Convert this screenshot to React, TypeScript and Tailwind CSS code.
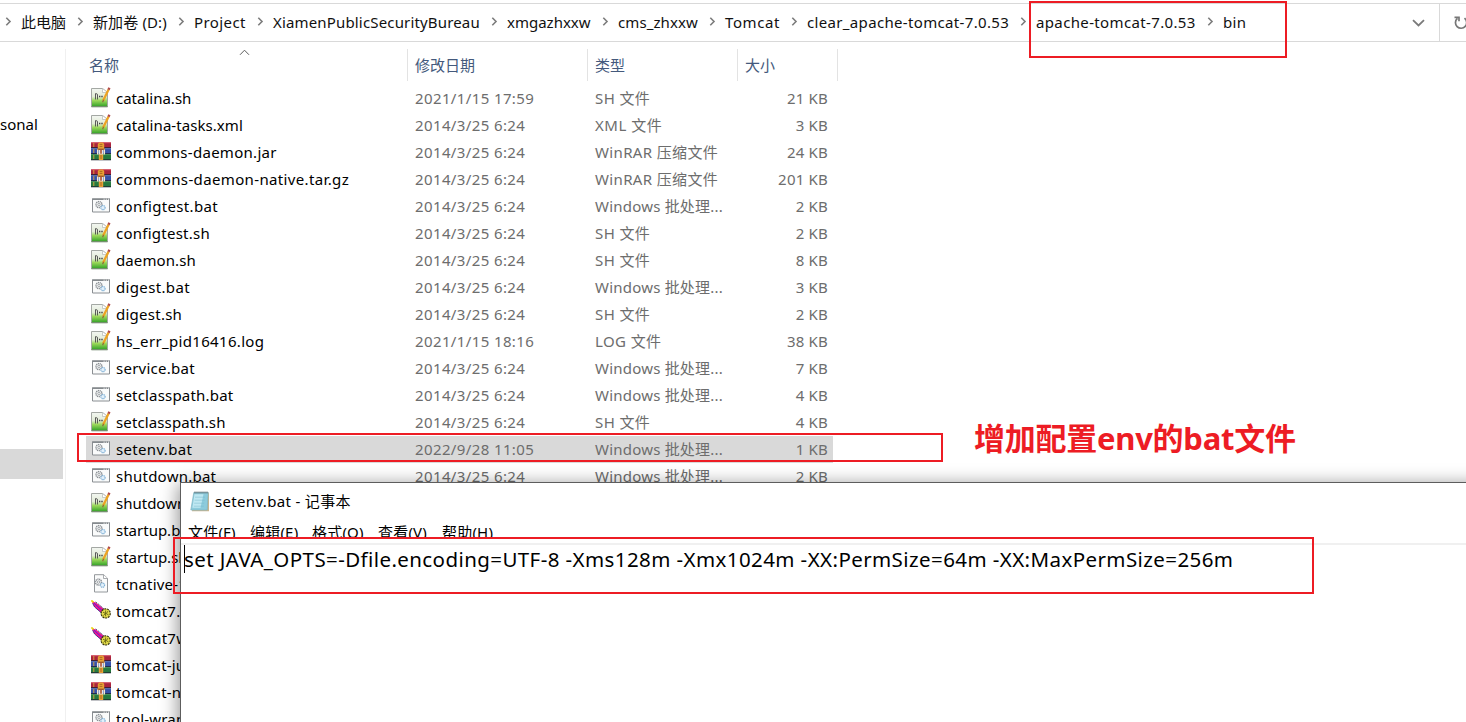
import React from "react";

type Kind = "npp" | "rar" | "bat" | "dll" | "feather";

interface FileRow {
  name: string;
  kind: Kind;
  date?: string;
  type?: string;
  size?: string;
  tracking?: string;
  selected?: boolean;
}

const D = "2014/3/25 6:24";
const BAT = "Windows 批处理...";
const RAR = "WinRAR 压缩文件";

const typeTracking: Record<string, string> = {
  [BAT]: "tracking-[0.21px]",
  [RAR]: "tracking-[0.36px]",
  "XML 文件": "tracking-[0.5px]",
};

const files: FileRow[] = [
  { name: "catalina.sh", kind: "npp", date: "2021/1/15 17:59", type: "SH 文件", size: "21 KB" },
  { name: "catalina-tasks.xml", kind: "npp", date: D, type: "XML 文件", size: "3 KB", tracking: "tracking-[0.06px]" },
  { name: "commons-daemon.jar", kind: "rar", date: D, type: RAR, size: "24 KB", tracking: "tracking-[0.28px]" },
  { name: "commons-daemon-native.tar.gz", kind: "rar", date: D, type: RAR, size: "201 KB", tracking: "tracking-[0.36px]" },
  { name: "configtest.bat", kind: "bat", date: D, type: BAT, size: "2 KB", tracking: "tracking-[0.33px]" },
  { name: "configtest.sh", kind: "npp", date: D, type: "SH 文件", size: "2 KB", tracking: "tracking-[0.25px]" },
  { name: "daemon.sh", kind: "npp", date: D, type: "SH 文件", size: "8 KB", tracking: "tracking-[0.1px]" },
  { name: "digest.bat", kind: "bat", date: D, type: BAT, size: "3 KB", tracking: "tracking-[0.35px]" },
  { name: "digest.sh", kind: "npp", date: D, type: "SH 文件", size: "2 KB", tracking: "tracking-[0.25px]" },
  { name: "hs_err_pid16416.log", kind: "npp", date: "2021/1/15 18:16", type: "LOG 文件", size: "38 KB", tracking: "tracking-[0.33px]" },
  { name: "service.bat", kind: "bat", date: D, type: BAT, size: "7 KB", tracking: "tracking-[0.25px]" },
  { name: "setclasspath.bat", kind: "bat", date: D, type: BAT, size: "4 KB", tracking: "tracking-[0.19px]" },
  { name: "setclasspath.sh", kind: "npp", date: D, type: "SH 文件", size: "4 KB", tracking: "tracking-[0.12px]" },
  { name: "setenv.bat", kind: "bat", date: "2022/9/28 11:05", type: BAT, size: "1 KB", tracking: "tracking-[0.33px]", selected: true },
  { name: "shutdown.bat", kind: "bat", date: D, type: BAT, size: "2 KB", tracking: "tracking-[0.25px]" },
  { name: "shutdown.sh", kind: "npp" },
  { name: "startup.bat", kind: "bat" },
  { name: "startup.sh", kind: "npp" },
  { name: "tcnative-1", kind: "dll", tracking: "tracking-[0.2px]" },
  { name: "tomcat7.", kind: "feather", tracking: "tracking-[0.3px]" },
  { name: "tomcat7w", kind: "feather", tracking: "tracking-[0.3px]" },
  { name: "tomcat-ju", kind: "rar", tracking: "tracking-[0.2px]" },
  { name: "tomcat-na", kind: "rar", tracking: "tracking-[0.2px]" },
  { name: "tool-wrap", kind: "bat", tracking: "tracking-[0.2px]" },
];

const crumbs: { label: string; style: string }[] = [
  { label: "此电脑", style: "w-[46px]" },
  { label: "新加卷 (D:)", style: "w-[75px] tracking-[0.12px]" },
  { label: "Project", style: "w-[53px] tracking-[0.42px]" },
  { label: "XiamenPublicSecurityBureau", style: "w-[208px] tracking-[0.16px]" },
  { label: "xmgazhxxw", style: "w-[85px]" },
  { label: "cms_zhxxw", style: "w-[81px] tracking-[0.1px]" },
  { label: "Tomcat", style: "w-[56px] tracking-[0.6px]" },
  { label: "clear_apache-tomcat-7.0.53", style: "w-[203px] tracking-[0.34px]" },
  { label: "apache-tomcat-7.0.53", style: "w-[161px] tracking-[0.36px]" },
  { label: "bin", style: "w-[24px] tracking-[0.3px]" },
];

function Gears() {
  return (
    <g fill="none">
      <circle cx="8" cy="6.6" r="3" stroke="#8a8f94" strokeWidth="1.5" strokeDasharray="1.2 0.6" />
      <circle cx="8" cy="6.6" r="1.2" stroke="#9a9fa4" strokeWidth="0.9" />
      <circle cx="12" cy="9.6" r="2.1" fill="#e3f1fb" stroke="#7fb0d6" strokeWidth="1.2" strokeDasharray="1.1 0.5" />
    </g>
  );
}

function FileIcon({ kind }: { kind: Kind }) {
  if (kind === "npp")
    return (
      <svg width="20" height="21" viewBox="0 0 20 21">
        <defs>
          <linearGradient id="green" x1="0" y1="0" x2="0" y2="1">
            <stop offset="0" stopColor="#f3f6f2" />
            <stop offset="0.45" stopColor="#e2ecd6" />
            <stop offset="0.66" stopColor="#9bd85a" />
            <stop offset="1" stopColor="#2fa026" />
          </linearGradient>
        </defs>
        <path d="M0.5 1.5h11l5 4v14.2h-16z" fill="url(#green)" stroke="#a4a8a4" />
        <path d="M0.5 19.7h16" stroke="#6d8a66" />
        <path d="M11.5 1.5v4h5z" fill="#fff" stroke="#b5b8b5" strokeWidth="0.7" />
        <path d="M4.5 6.5v6M6.5 7.2v5.3M4.5 6.8h1.6" stroke="#4a4a4a" strokeWidth="0.9" fill="none" />
        <path d="M8 9.5h1.4M10.3 9.5h1.4" stroke="#444" strokeWidth="1.6" />
        <path d="M17.6 2.5L12.2 13.6" stroke="#eda322" strokeWidth="2.3" />
        <path d="M18.4 0.8l-0.9 2" stroke="#b04a48" strokeWidth="2.4" />
        <path d="M12.6 12.8l-1 2.4" stroke="#8c6a3a" strokeWidth="1.2" />
      </svg>
    );
  if (kind === "rar")
    return (
      <svg width="20" height="19" viewBox="0 0 20 19">
        <path d="M0 0h20v6H0z" fill="#a8233d" />
        <path d="M0 0.6h20" stroke="#d66173" strokeWidth="1.2" />
        <path d="M0 6h20v6H0z" fill="#3451a8" />
        <path d="M0 6.6h20" stroke="#6b86d0" />
        <path d="M0 12h20v6H0z" fill="#26793f" />
        <path d="M0 12.6h20" stroke="#58ad68" />
        <path d="M0 5.7h20M0 11.7h20M0 17.8h20" stroke="#1d1e30" strokeWidth="0.9" />
        <path d="M2.8 1v4M2.8 7v4M2.8 13v4" stroke="#e5a93c" strokeWidth="0.9" />
        <path d="M6.8 2l1.4-1.6h3.6L13.2 2v5H6.8zM7.8 12h4.4v6H7.8z" fill="#e8a035" />
        <path d="M8.6 2.4h2.8M8.6 4.4h2.8M9 14h2M9 16h2" stroke="#9a5a20" strokeWidth="0.8" />
        <path d="M6 6.6h8v2H6z" fill="#9a5e2a" />
        <path d="M6.6 7.4v5M13.4 7.4v5" stroke="#f6e7d2" strokeWidth="1.3" />
        <path d="M7.6 8h4.8v4.4H7.6z" fill="#dfe5ea" />
        <path d="M10 7.6v4.2" stroke="#b3502c" strokeWidth="1.6" />
      </svg>
    );
  if (kind === "bat")
    return (
      <svg width="20" height="15" viewBox="0 0 20 15">
        <path d="M1.5 1h17v13h-17z" fill="#fafbfb" stroke="#8a8e92" />
        <path d="M1 1.2h18" stroke="#858a8e" strokeWidth="1.6" />
        <path d="M12.6 1.2h1M14.8 1.2h1M17 1.2h1" stroke="#fff" />
        <Gears />
      </svg>
    );
  if (kind === "dll")
    return (
      <svg width="20" height="19" viewBox="0 0 20 19">
        <path d="M3.5 0.7h9.2l3.8 3.6v13.7h-13z" fill="#fafbfb" stroke="#94989c" />
        <path d="M12.5 0.7v3.8h4" fill="#fff" stroke="#94989c" strokeWidth="0.8" />
        <g transform="translate(-0.5 1.5)">
          <Gears />
        </g>
      </svg>
    );
  return (
    <svg width="21" height="20" viewBox="0 0 21 20">
      <path d="M0.8 1.2l4 1.2 9 7.4-3 3.4-7.6-6.6z" fill="#f0148c" />
      <path d="M1.6 3.2l2 3.8 7 6" stroke="#3a2a8c" strokeWidth="0.9" fill="none" />
      <path d="M3 3.2l8.6 7.8" stroke="#5a22e0" strokeWidth="1" />
      <path d="M4.6 2l3.2 2.4 5 4.4" stroke="#35336a" strokeWidth="0.9" strokeDasharray="2 1" fill="none" />
      <path d="M0.3 0.4l2.2 2" stroke="#e9d514" strokeWidth="1.8" />
      <circle cx="14.7" cy="13.4" r="4.6" fill="#e2da48" stroke="#35340f" strokeWidth="1.2" strokeDasharray="2 0.8" />
      <path d="M12 12.2l2.4 1.2-2 2.2M16.8 11.2l-1.4 2.4 2.2 1.4M14.6 10.5v5.8" stroke="#57540e" strokeWidth="0.8" fill="none" />
    </svg>
  );
}

function Chevron() {
  return (
    <span className="flex w-[26px] shrink-0 justify-center pb-0.5">
      <svg width="7" height="9" viewBox="0 0 7 9">
        <path d="M1.3 0.8L5 4.5L1.3 8.2" fill="none" stroke="#7c7c7c" strokeWidth="1.6" />
      </svg>
    </span>
  );
}

function AddressBar() {
  return (
    <div className="mt-[3px] flex h-[39px] items-center border-y border-[#d9d9d9] text-[#111]">
      <div className="-ml-[5px] flex h-full flex-1 items-center">
        {crumbs.map((c) => (
          <React.Fragment key={c.label}>
            <Chevron />
            <span className={`${c.style} shrink-0 whitespace-nowrap pb-0.5`}>{c.label}</span>
          </React.Fragment>
        ))}
      </div>
      <svg className="mr-[14px]" width="13" height="8" viewBox="0 0 13 8">
        <path d="M1 1.2L6.5 6.4L12 1.2" fill="none" stroke="#7a7a7a" strokeWidth="1.8" />
      </svg>
      <div className="flex h-full w-[27px] items-center overflow-hidden border-l border-[#d9d9d9] pl-[13px]">
        <svg className="shrink-0" width="16" height="16" viewBox="0 0 16 16">
          <path d="M11.5 3.2A5.6 5.6 0 1 1 4.4 3.4M1.5 2.3H6V6.3" fill="none" stroke="#777" strokeWidth="1.7" />
        </svg>
      </div>
    </div>
  );
}

function Header() {
  const cell = "flex h-8 items-center border-r border-[#e3e3e3] text-[#44597c]";
  return (
    <div className="relative mt-[7px] flex">
      <div className={`${cell} w-[342px] pl-[23px]`}>名称</div>
      <div className={`${cell} w-[180px] pl-[7px]`}>修改日期</div>
      <div className={`${cell} w-[150px] pl-[7px]`}>类型</div>
      <div className={`${cell} w-[100px] pl-[7px]`}>大小</div>
      <svg className="absolute left-[173px] top-0" width="11" height="7" viewBox="0 0 11 7">
        <path d="M1 5.8L5.5 1.2L10 5.8" fill="none" stroke="#5c5c5c" />
      </svg>
    </div>
  );
}

function FileList() {
  return (
    <div className="mt-1 pl-5">
      {files.map((f) => (
        <div
          key={f.name}
          className={`flex h-[27px] w-[747px] items-center whitespace-nowrap pb-0.5 text-[#6d6d6d] ${f.selected ? "bg-[#d9d9d9]" : ""}`}
        >
          <span className="flex w-[30px] shrink-0 pb-px pl-[5px]">
            <FileIcon kind={f.kind} />
          </span>
          <span className={`w-[299px] text-black ${f.tracking ?? ""}`}>{f.name}</span>
          <span className="w-[180px] tracking-[0.38px]">{f.date}</span>
          <span className={`w-[150px] ${typeTracking[f.type ?? ""] ?? "tracking-[0.4px]"}`}>{f.type}</span>
          <span className="w-[83px] text-right tracking-[0.2px]">{f.size}</span>
        </div>
      ))}
    </div>
  );
}

function Notepad() {
  const menus = ["文件(F)", "编辑(E)", "格式(O)", "查看(V)", "帮助(H)"];
  const widths = ["w-[62px]", "w-[62px]", "w-[66px]", "w-[64px]", "w-[60px]"];
  return (
    <div className="absolute left-[180px] top-[482px] h-[300px] w-[1400px] border border-[#5d5d5d] bg-white text-black shadow-[0_4px_17px_2px_rgba(0,0,0,0.42)]">
      <div className="flex h-9 items-center pl-[9px]">
        <svg width="20" height="21" viewBox="0 0 20 21">
          <path d="M4 1.5h15v18.7H2z" fill="#c9b58e" />
          <path d="M3.8 1.5h14.4l-1 17.5H0.8z" fill="#8ccbdc" stroke="#7fb4c4" strokeWidth="0.7" />
          <path d="M4.5 3.2h9l-3 13.5H2.4z" fill="#bfe8f2" />
          <path d="M5 6.2h10M4.6 9.2h10M4.2 12.2h10M3.8 15.2h10" stroke="#74b6ca" strokeWidth="0.5" />
          <path d="M4.5 1.6h13.5" stroke="#5d6b70" strokeWidth="2" strokeDasharray="1 1" />
        </svg>
        <span className="ml-[5px] tracking-[0.33px]">setenv.bat - 记事本</span>
      </div>
      <div className="flex h-5 items-start overflow-hidden pl-[7px] leading-[27px] tracking-[0.2px]">
        {menus.map((m, i) => (
          <span key={m} className={`${widths[i]} shrink-0 whitespace-nowrap`}>
            {m}
          </span>
        ))}
      </div>
      <div className="mt-1 h-0.5 bg-[#f0f0f0]" />
      <div className="flex items-start pl-[3px]">
        <span className="h-7 w-px shrink-0 bg-black" />
        <span className="-ml-px whitespace-nowrap text-[20.5px] leading-[28px] tracking-[0.41px]">
          set JAVA_OPTS=-Dfile.encoding=UTF-8 -Xms128m -Xmx1024m -XX:PermSize=64m -XX:MaxPermSize=256m
        </span>
      </div>
    </div>
  );
}

export default function App() {
  return (
    <div className="relative flex h-[722px] w-[1466px] flex-col overflow-hidden bg-white font-['Noto_Sans','Noto_Sans_CJK_SC',sans-serif] text-[15px] leading-[20px]">
      <AddressBar />
      <div className="flex min-h-0 flex-1">
        <aside className="mt-[7px] w-[66px] shrink-0 border-r border-[#f0f0f0] pt-[65px]">
          <div>sonal</div>
          <div className="mt-[315px] h-[30px] w-[63px] bg-[#d9d9d9]" />
        </aside>
        <main>
          <Header />
          <FileList />
        </main>
      </div>
      <Notepad />
      <div className="absolute left-[1029px] top-px h-[57px] w-[258px] border-2 border-[#ed1c24]" />
      <div className="absolute left-[77px] top-[433px] h-[29px] w-[866px] border-2 border-[#ed1c24]" />
      <div className="absolute left-[173px] top-[537px] h-[57px] w-[1141px] border-2 border-[#ed1c24]" />
      <div className="absolute left-[974px] top-[418px] whitespace-nowrap text-[31px] font-bold leading-[40px] tracking-[-0.25px] text-[#ed1c24]">
        增加配置env的bat文件
      </div>
    </div>
  );
}
